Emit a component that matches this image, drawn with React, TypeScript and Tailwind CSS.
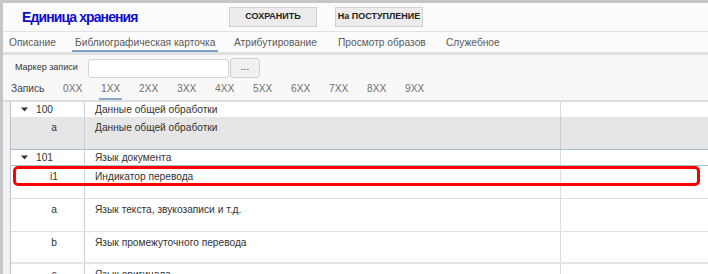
import React from "react";

const tabs = [
  { label: "Описание", w: "w-[66px]" },
  { label: "Библиографическая карточка", w: "w-[159px]", active: true },
  { label: "Атрибутирование", w: "w-[104px]" },
  { label: "Просмотр образов", w: "w-[108px]" },
  { label: "Служебное", w: "w-[100px]" },
];

const sections = ["0XX", "1XX", "2XX", "3XX", "4XX", "5XX", "6XX", "7XX", "8XX", "9XX"];

type Row = {
  code: string;
  name: string;
  group?: boolean;
  h: string;
  bg?: string;
  line: string;
  marked?: boolean;
};

const rows: Row[] = [
  { code: "100", name: "Данные общей обработки", group: true, h: "h-[15px]", line: "border-b-0" },
  { code: "a", name: "Данные общей обработки", h: "h-[33px]", bg: "bg-[#e6e6e6]", line: "border-b border-[#a9bfd3]" },
  { code: "101", name: "Язык документа", group: true, h: "h-[16px]", line: "border-b border-[#a9bfd3]" },
  { code: "i1", name: "Индикатор перевода", h: "h-[33px]", line: "border-b border-[#e0e0e0]", marked: true },
  { code: "a", name: "Язык текста, звукозаписи и т.д.", h: "h-[33px]", line: "border-b border-[#e0e0e0]" },
  { code: "b", name: "Язык промежуточного перевода", h: "h-[32px]", line: "border-b-2 border-[#e4e4e4]" },
  { code: "c", name: "Язык оригинала", h: "h-[33px]", line: "border-b border-[#e0e0e0]" },
];

const Caret = () => (
  <svg width="7" height="5" viewBox="0 0 7 5" className="mr-[8px]">
    <path d="M0 0.5 L7 0.5 L3.5 4.5 Z" fill="#333" />
  </svg>
);

const App = () => {
  return (
    <div
      className="w-[708px] h-[274px] overflow-hidden bg-[#f1f1f1] border-t-[3px] border-l-[3px] border-[#c6c6c6] text-[10.2px] text-[#333]"
      style={{ fontFamily: '"Liberation Sans", Arial, sans-serif' }}
    >
      {/* Header */}
      <div className="h-[29px] flex items-center bg-[#fbfbfb] border-b border-[#e2e2e2]">
        <div className="w-[226px] pl-[19px] text-[14px] tracking-[-0.9px] font-bold text-[#0d0dcc] leading-none">
          Единица хранения
        </div>
        <button className="w-[88px] h-[20px] bg-[#ececec] border border-[#d2d2d2] text-[9px] font-bold text-[#222] whitespace-nowrap">
          СОХРАНИТЬ
        </button>
        <button className="ml-[18px] w-[88px] h-[20px] bg-[#ececec] border border-[#d2d2d2] text-[9px] font-bold text-[#222] whitespace-nowrap">
          На ПОСТУПЛЕНИЕ
        </button>
      </div>

      {/* Tabs */}
      <div className="h-[23px] flex items-end bg-[#fbfbfb] border-b-[3px] border-[#e0e0e0] pl-[3px] text-[#5a5a5a]">
        {tabs.map((t) => (
          <div key={t.label} className={`${t.w} shrink-0`}>
            <span
              className={`inline-block px-[3px] whitespace-nowrap border-b-2 ${
                t.active ? "border-[#7b9fc7]" : "border-transparent"
              }`}
            >
              {t.label}
            </span>
          </div>
        ))}
      </div>

      {/* Filter panel */}
      <div className="h-[47px] bg-[#f8f8f8] border-b-2 border-[#dcdcdc] pt-[3px]">
        <div className="flex items-center h-[20px]">
          <div className="w-[85px] pl-[12px] text-[9px] text-[#333] whitespace-nowrap">Маркер записи</div>
          <div className="w-[141px] h-[19px] bg-white border border-[#d4d4d4] rounded-[3px]" />
          <button className="ml-[1px] w-[30px] h-[20px] bg-[#f0f0f0] border border-[#cfcfcf] rounded-[3px] text-[10px] leading-none text-[#333] pb-[3px]">
            ...
          </button>
        </div>
        <div className="flex items-end h-[22px] text-[#707070]">
          <div className="w-[58px] pl-[8px] pb-[4px] text-[#444]">Запись</div>
          {sections.map((s) => (
            <div key={s} className="w-[38px] shrink-0">
              <span
                className={`inline-block px-[2px] pb-[2px] border-b-2 ${
                  s === "1XX" ? "border-[#8aa8c8]" : "border-transparent"
                }`}
              >
                {s}
              </span>
            </div>
          ))}
        </div>
      </div>

      {/* Table */}
      <div className="ml-[7px] bg-white border-l border-[#b9c4cf]">
        {rows.map((r, i) => (
          <div key={i} className={`relative flex ${r.h} ${r.bg ?? "bg-white"} ${r.line}`}>
            <div className="w-[74px] shrink-0 border-r border-[#c5d3e0] flex items-start">
              {r.group ? (
                <div className="flex items-center h-full pl-[10px]">
                  <Caret />
                  <span>{r.code}</span>
                </div>
              ) : (
                <div className="ml-[35px] w-[16px] text-center pt-[3px]">{r.code}</div>
              )}
            </div>
            <div className={`w-[476px] shrink-0 border-r ${r.bg ? "border-[#c9cdd1]" : "border-[#dcdcdc]"} pl-[10px] ${r.group ? "flex items-center h-full" : "pt-[3px]"}`}>
              {r.name}
            </div>
            <div className="flex-1" />
            {r.marked && (
              <div className="absolute left-[2px] top-0 w-[687px] h-[20px] border-[3px] border-[#ff0000] rounded-[5px]" />
            )}
          </div>
        ))}
      </div>
    </div>
  );
};

export default App;
